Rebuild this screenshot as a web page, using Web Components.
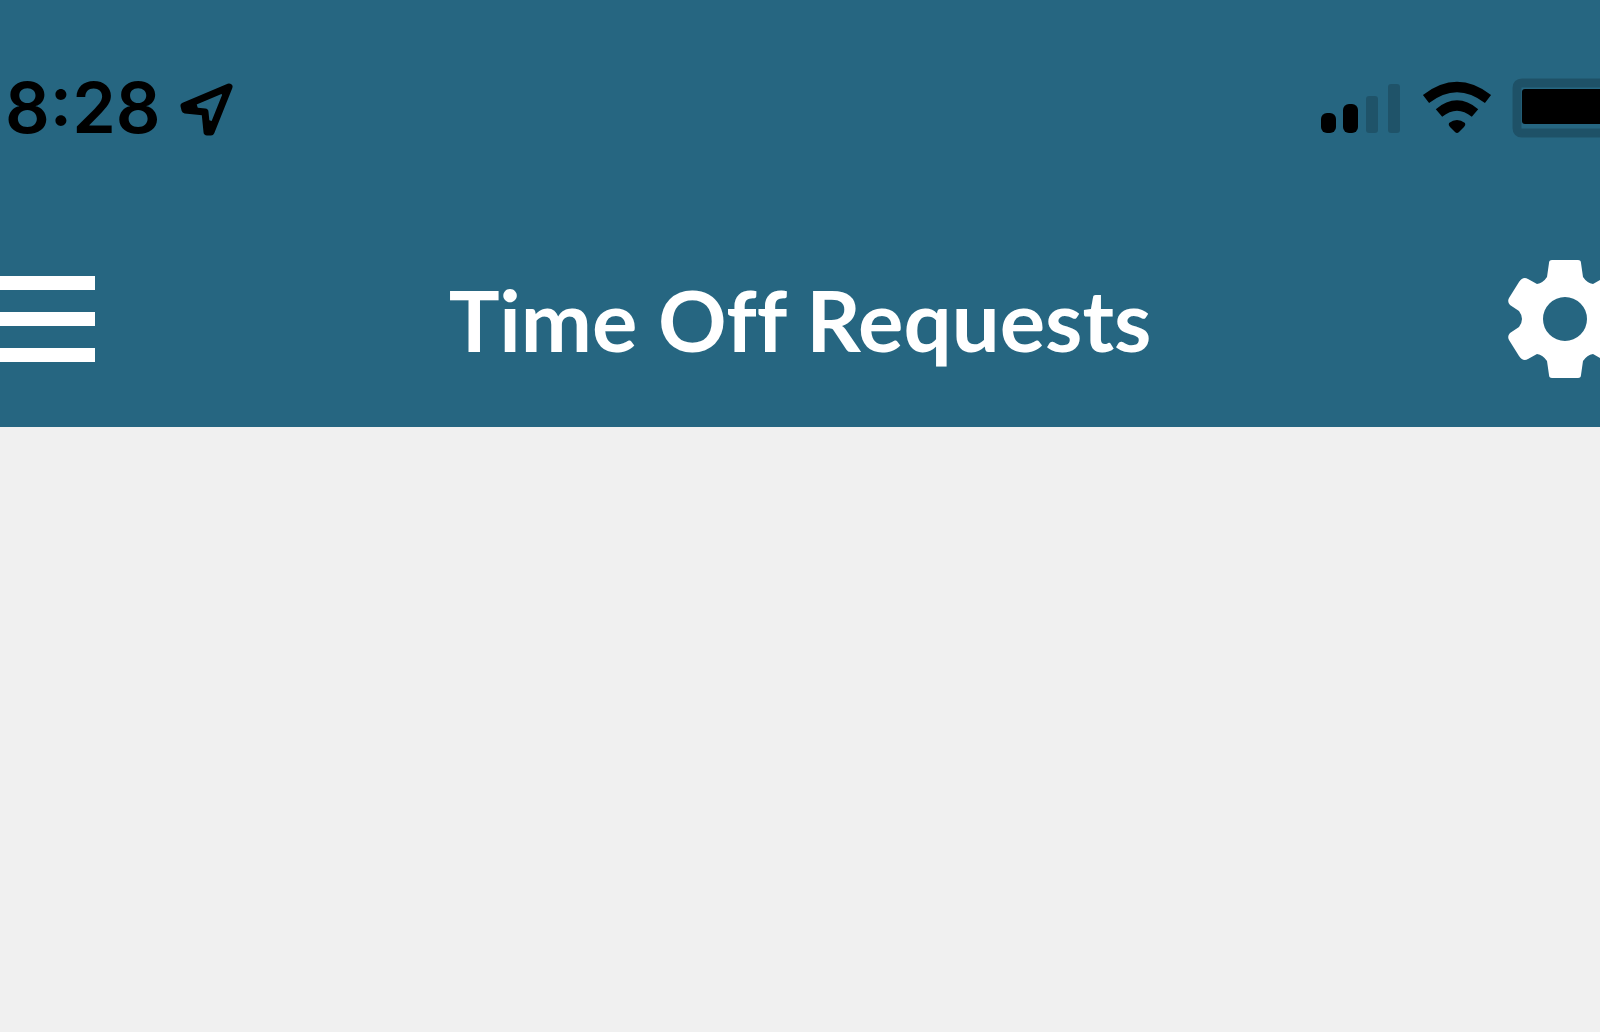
<!DOCTYPE html>
<html lang="en">
<head>
<meta charset="UTF-8">
<meta name="viewport" content="width=device-width, initial-scale=1.0">
<title>Time Off Requests</title>
<style>
    :root {
        --header-color: #266681;
        --page-color: #f0f0f0;
    }

    body {
        margin: 0;
        background-color: var(--page-color);
        font-family: Lato, sans-serif;
    }
</style>
</head>
<body>
<time-off-app>
    <status-bar slot="header" time="8:28"></status-bar>
    <nav-bar slot="header">Time Off Requests</nav-bar>
</time-off-app>

<script>
class TimeOffApp extends HTMLElement {
    constructor() {
        super();
        this.attachShadow({ mode: 'open' });
    }

    connectedCallback() {
        this.shadowRoot.innerHTML = `
            <style>
                :host {
                    display: flex;
                    flex-direction: column;
                    min-height: 100vh;
                    overflow: hidden;
                }

                header {
                    background-color: var(--header-color, #266681);
                    padding-bottom: 6px;
                }

                main { flex: 1; }
            </style>
            <header><slot name="header"></slot></header>
            <main><slot></slot></main>
        `;
    }
}

class StatusBar extends HTMLElement {
    constructor() {
        super();
        this.attachShadow({ mode: 'open' });
    }

    connectedCallback() {
        const time = this.getAttribute('time');
        this.shadowRoot.innerHTML = `
            <style>
                :host {
                    display: flex;
                    justify-content: space-between;
                    align-items: center;
                    height: 216px;
                    padding-left: 5px;
                    box-sizing: border-box;
                    color: #000;
                    overflow: hidden;
                }

                .clock, .indicators {
                    display: flex;
                    align-items: center;
                }

                .clock { gap: 18px; }

                .time {
                    font-family: Inter, sans-serif;
                    font-size: 70px;
                    font-weight: 600;
                    line-height: 80px;
                }

                .indicators { gap: 20px; }

                svg {
                    display: block;
                    flex: none;
                }
            </style>
            <div class="clock">
                <span class="time">${time}</span>
                <svg width="56" height="56" viewBox="0 0 56 56" aria-hidden="true">
                    <path d="M50 7 L5 26 L6 30 L26 32 L28 52 L32 52 Z" fill="none" stroke="currentColor" stroke-width="7" stroke-linejoin="round"/>
                    <path d="M3 27 L17 22 L20 32 L6 31 Z M26 39 L36 42 L32 53 L28 53 Z M39 9 L52 5 L46 19 Z"/>
                </svg>
            </div>
            <div class="indicators">
                <svg width="82" height="56" viewBox="0 0 82 56" role="img" aria-label="Signal">
                    <rect x="1" y="33" width="15" height="20" rx="6"/>
                    <rect x="23" y="24" width="15" height="29" rx="6"/>
                    <rect x="46" y="16" width="12" height="37" rx="3" opacity=".18"/>
                    <rect x="68" y="4" width="12" height="49" rx="3" opacity=".18"/>
                </svg>
                <svg width="70" height="56" viewBox="0 0 70 56" role="img" aria-label="Wi-Fi">
                    <path d="M4 19 Q35 -5 66 19" fill="none" stroke="currentColor" stroke-width="10"/>
                    <path d="M17 33 Q35 18 53 33" fill="none" stroke="currentColor" stroke-width="10"/>
                    <path d="M27 43 Q35 37 43 43 Q44 45 42 47 L37 52 Q35 54 33 52 L28 47 Q26 45 27 43 Z"/>
                </svg>
                <!-- battery runs past the edge of the screen -->
                <svg width="88" height="60" viewBox="0 0 88 60" role="img" aria-label="Battery">
                    <path d="M88 5 H10 Q5 5 5 10 V50 Q5 55 10 55 H88" fill="none" stroke="currentColor" stroke-width="9" opacity=".2"/>
                    <path d="M88 11 H13 Q10 11 10 14 V43 Q10 46 13 46 H88 Z"/>
                </svg>
            </div>
        `;
    }
}

class NavBar extends HTMLElement {
    constructor() {
        super();
        this.attachShadow({ mode: 'open' });
    }

    connectedCallback() {
        this.shadowRoot.innerHTML = `
            <style>
                :host {
                    display: grid;
                    grid-template-columns: 1fr auto 1fr;
                    align-items: center;
                    height: 205px;
                    color: #fff;
                    overflow: hidden;
                }

                h1 {
                    margin: 0;
                    font-size: 85px;
                    font-weight: 700;
                    font-variant-ligatures: none;
                    line-height: 100px;
                    white-space: nowrap;
                }

                button {
                    padding: 0;
                    border: 0;
                    background: none;
                    color: inherit;
                    cursor: pointer;
                }

                .menu { justify-self: start; }

                /* the gear is cut off by the screen edge */
                .settings {
                    justify-self: end;
                    margin-right: -25px;
                }

                svg { display: block; }
            </style>
            <button class="menu" type="button" aria-label="Menu">
                <svg width="96" height="88" viewBox="0 0 96 88" fill="currentColor">
                    <rect y="1" width="95" height="14"/>
                    <rect y="37" width="95" height="14"/>
                    <rect y="73" width="95" height="14"/>
                </svg>
            </button>
            <h1><slot></slot></h1>
            <button class="settings" type="button" aria-label="Settings">
                <svg width="120" height="120" viewBox="-60 -60 120 120" fill="currentColor" fill-rule="evenodd">
                    <path d="M-13 -59 H13 Q16 -59 16 -56 L18 -42 Q22 -36 28 -35 L37 -40 Q42 -43 46 -37 L56 -21 Q58 -17 55 -14 L46 -8 Q40 0 46 8 L55 14 Q58 17 56 21 L46 37 Q42 43 37 40 L28 35 Q22 36 18 42 L16 56 Q16 59 13 59 H-13 Q-16 59 -16 56 L-18 42 Q-22 36 -28 35 L-37 40 Q-42 43 -46 37 L-56 21 Q-58 17 -55 14 L-46 8 Q-40 0 -46 -8 L-55 -14 Q-58 -17 -56 -21 L-46 -37 Q-42 -43 -37 -40 L-28 -35 Q-22 -36 -18 -42 L-16 -56 Q-16 -59 -13 -59 Z M0 -22 A22 22 0 1 0 0 22 A22 22 0 1 0 0 -22 Z"/>
                </svg>
            </button>
        `;
    }
}

customElements.define('time-off-app', TimeOffApp);
customElements.define('status-bar', StatusBar);
customElements.define('nav-bar', NavBar);
</script>
</body>
</html>
